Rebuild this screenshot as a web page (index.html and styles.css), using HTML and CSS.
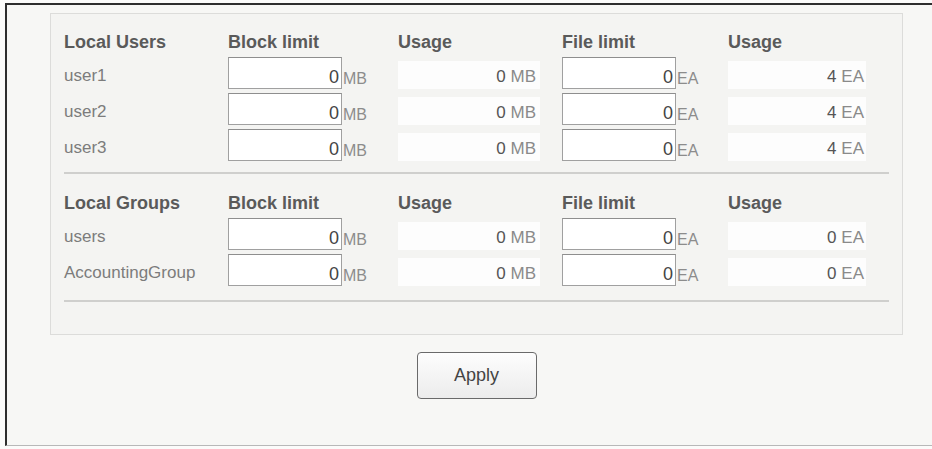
FILE: index.html
```html
<!DOCTYPE html>
<html>
<head>
<meta charset="utf-8">
<link rel="stylesheet" href="styles.css">
</head>
<body>
<div class="frame">
  <div class="panel">
    <div class="grid">
      <div class="hd">Local Users</div>
      <div class="hd">Block limit</div>
      <div class="hd">Usage</div>
      <div class="hd">File limit</div>
      <div class="hd">Usage</div>

      <div class="lbl">user1</div>
      <div class="lim"><span class="box">0</span><span class="unit">MB</span></div>
      <div class="use u1"><span class="num">0</span>&nbsp;<span class="unit2">MB</span></div>
      <div class="lim"><span class="box">0</span><span class="unit">EA</span></div>
      <div class="use u2"><span class="num">4</span>&nbsp;<span class="unit2">EA</span></div>

      <div class="lbl">user2</div>
      <div class="lim"><span class="box">0</span><span class="unit">MB</span></div>
      <div class="use u1"><span class="num">0</span>&nbsp;<span class="unit2">MB</span></div>
      <div class="lim"><span class="box">0</span><span class="unit">EA</span></div>
      <div class="use u2"><span class="num">4</span>&nbsp;<span class="unit2">EA</span></div>

      <div class="lbl">user3</div>
      <div class="lim"><span class="box">0</span><span class="unit">MB</span></div>
      <div class="use u1"><span class="num">0</span>&nbsp;<span class="unit2">MB</span></div>
      <div class="lim"><span class="box">0</span><span class="unit">EA</span></div>
      <div class="use u2"><span class="num">4</span>&nbsp;<span class="unit2">EA</span></div>
    </div>
    <div class="sep"></div>
    <div class="grid">
      <div class="hd">Local Groups</div>
      <div class="hd">Block limit</div>
      <div class="hd">Usage</div>
      <div class="hd">File limit</div>
      <div class="hd">Usage</div>

      <div class="lbl">users</div>
      <div class="lim"><span class="box">0</span><span class="unit">MB</span></div>
      <div class="use u1"><span class="num">0</span>&nbsp;<span class="unit2">MB</span></div>
      <div class="lim"><span class="box">0</span><span class="unit">EA</span></div>
      <div class="use u2"><span class="num">0</span>&nbsp;<span class="unit2">EA</span></div>

      <div class="lbl">AccountingGroup</div>
      <div class="lim"><span class="box">0</span><span class="unit">MB</span></div>
      <div class="use u1"><span class="num">0</span>&nbsp;<span class="unit2">MB</span></div>
      <div class="lim"><span class="box">0</span><span class="unit">EA</span></div>
      <div class="use u2"><span class="num">0</span>&nbsp;<span class="unit2">EA</span></div>
    </div>
    <div class="sep sep-last"></div>
  </div>
  <div class="actions">
    <button class="btn">Apply</button>
  </div>
</div>
</body>
</html>
```
FILE: styles.css
```css
html, body {
  margin: 0;
  padding: 0;
  background: #fbfbfa;
  overflow: hidden;
}
body {
  width: 932px;
  height: 449px;
  font-family: "Liberation Sans", Arial, sans-serif;
}
.frame {
  margin: 3px 0 0 5px;
  width: 940px;
  height: 443px;
  border-top: 2px solid #2e2e2e;
  border-left: 2px solid #2e2e2e;
  border-bottom: 1px solid #b8b8b8;
  background: #f7f7f5;
  box-sizing: border-box;
  padding: 8px 0 0 43px;
}
.panel {
  width: 853px;
  box-sizing: border-box;
  border: 1px solid #dcdcda;
  background: #f4f4f2;
  padding: 13px 13px 32px 13px;
}
.grid {
  display: grid;
  grid-template-columns: 164px 170px 164px 166px 138px;
  grid-auto-rows: 36px;
  grid-template-rows: 30px;
}
.hd {
  font-weight: bold;
  font-size: 18px;
  color: #5a5a5a;
  display: flex;
  align-items: center;
}
.lbl {
  font-size: 17px;
  color: #7c7c7c;
  display: flex;
  align-items: center;
  padding-top: 2px;
}
.lim {
  display: flex;
  align-items: flex-start;
}
.box {
  width: 114px;
  height: 32px;
  box-sizing: border-box;
  border: 1px solid #a0a0a0;
  border-top-color: #8e8e8e;
  background: #fff;
  text-align: right;
  padding: 8px 2px 0 0;
  line-height: 22px;
  font-size: 18px;
  color: #444;
}
.unit {
  align-self: flex-end;
  margin-bottom: 5px;
  line-height: 18px;
  font-size: 16px;
  color: #8c8c8c;
  padding-left: 1px;
}
.use {
  margin: 4px 0;
  background: #fdfdfd;
  display: flex;
  align-items: center;
  justify-content: flex-end;
  font-size: 17px;
  padding-top: 3px;
}
.u1 {
  width: 142px;
  padding-right: 4px;
  box-sizing: border-box;
}
.u2 {
  width: 138px;
  padding-right: 2px;
  box-sizing: border-box;
}
.num {
  color: #555;
}
.unit2 {
  color: #8a8a8a;
}
.sep {
  height: 2px;
  background: #cfcfcd;
  margin: 7px 0 14px 0;
}
.sep-last {
  margin: 10px 0 0 0;
}
.actions {
  width: 853px;
  display: flex;
  justify-content: center;
  padding-top: 17px;
}
.btn {
  width: 120px;
  height: 47px;
  border: 1px solid #6a6a6a;
  border-radius: 4px;
  background: linear-gradient(#fdfdfd, #ececec);
  font-family: "Liberation Sans", Arial, sans-serif;
  font-size: 18px;
  color: #444;
  padding: 0;
}
```
